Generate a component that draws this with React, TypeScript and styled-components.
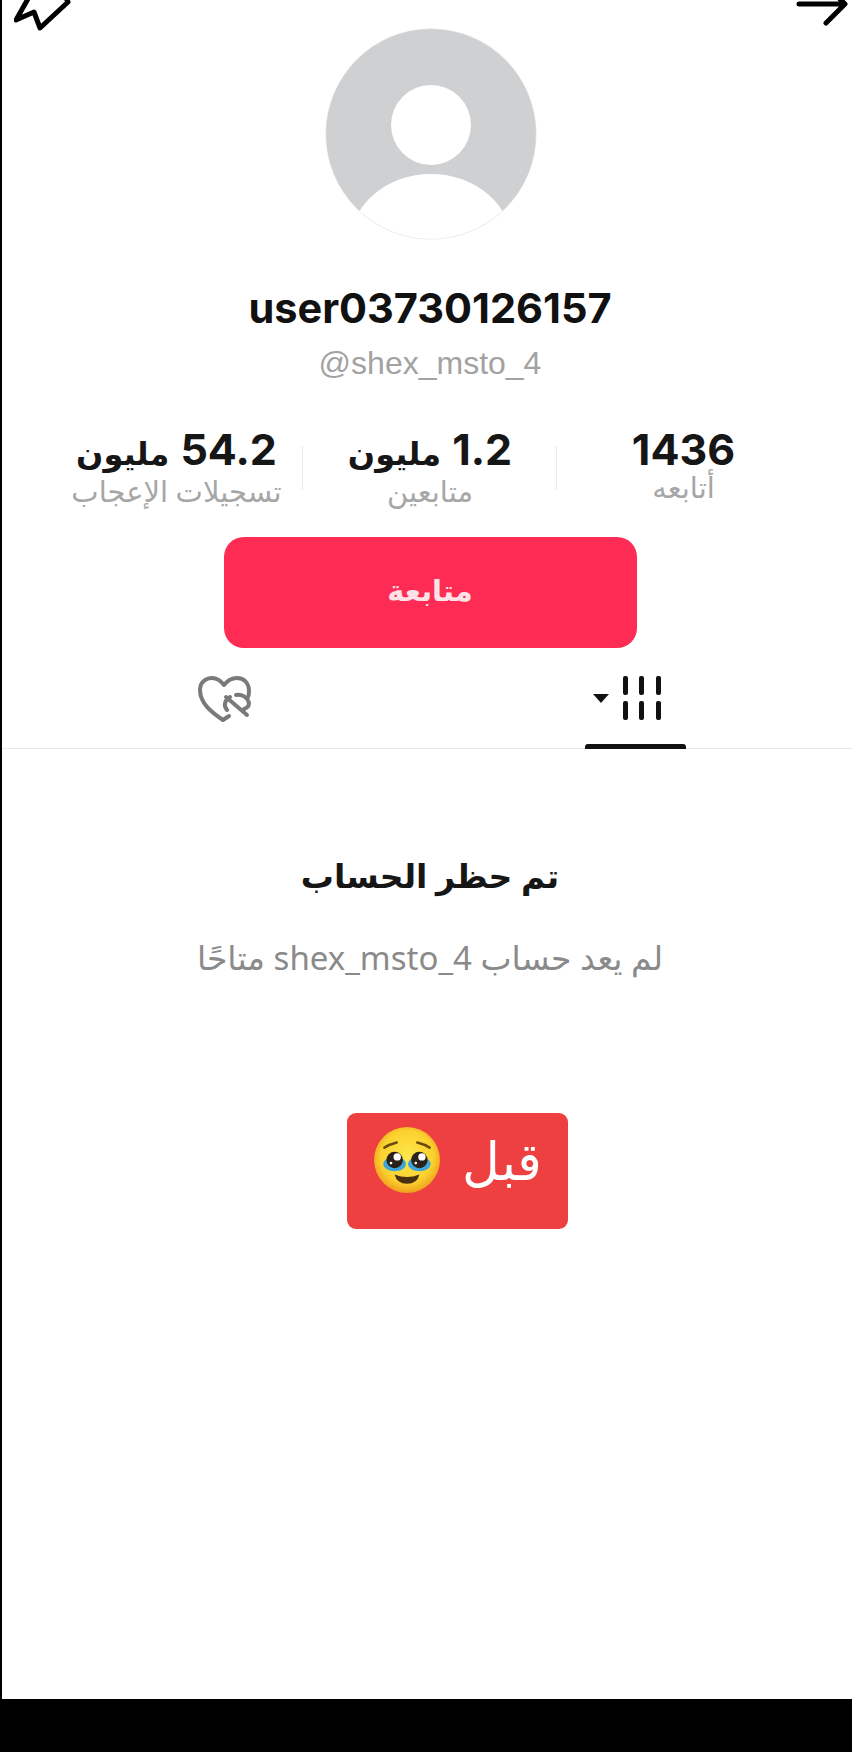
import React from 'react'
import styled, { createGlobalStyle } from 'styled-components'

const GlobalStyle = createGlobalStyle`
    html, body {
        margin: 0;
        padding: 0;
        background: #000;
    }
`

const ARABIC = `"Noto Sans", "Liberation Sans", "DejaVu Sans", sans-serif`
const LATIN = `"Liberation Sans", Arial, sans-serif`
const NUMERIC = `Inter, "Noto Sans", sans-serif`

const Screen = styled.div`
    width: 852px;
    height: 1752px;
    background: #000;
    overflow: hidden;
`

const Page = styled.main`
    height: 1699px;
    box-sizing: border-box;
    margin-left: 2px;
    padding-left: 6px;
    background: #fff;
    display: flex;
    flex-direction: column;
    align-items: center;
`

const TopBar = styled.header`
    align-self: stretch;
    margin-left: -6px;
    height: 28px;
    box-sizing: border-box;
    padding-left: 12px;
    display: flex;
    justify-content: space-between;
    align-items: flex-start;
`

const Avatar = styled.svg`
    display: block;
    flex: none;
    margin-left: 1px;
    width: 212px;
    height: 212px;
`

const Username = styled.h1`
    margin: 44px 0 0;
    font: 700 41.5px/48px ${NUMERIC};
    color: #111;
`

const Handle = styled.div`
    margin-top: 12px;
    font: 400 32px/38px ${LATIN};
    color: #a2a2a2;
`

const Stats = styled.section`
    margin: 44px 0 0 -6px;
    align-self: stretch;
    display: grid;
    grid-template-columns: 301px 254px 1fr;
`

const Stat = styled.div<{ $divider?: boolean; $inset?: string }>`
    position: relative;
    height: 82px;
    box-sizing: border-box;
    padding: ${p => p.$inset || '0'};
    display: flex;
    flex-direction: column;
    align-items: center;
    ${p => p.$divider && `
        &::after {
            content: '';
            position: absolute;
            right: 0;
            top: 20px;
            height: 44px;
            width: 1px;
            background: #e9e9e9;
        }
    `}
`

const StatValue = styled.div`
    display: flex;
    align-items: baseline;
    gap: 11px;
    font: 700 43px/46px ${NUMERIC};
    color: #161616;
    white-space: nowrap;
`

const StatUnit = styled.span`
    font: 700 32px/46px ${ARABIC};
`

const StatLabel = styled.div`
    font: 400 29px/30px ${ARABIC};
    color: #a6a6a6;
    white-space: nowrap;
`

const FollowButton = styled.button`
    margin-top: 29px;
    flex: none;
    width: 413px;
    height: 111px;
    padding: 0 0 6px;
    border: 0;
    border-radius: 20px;
    background: #fe2c55;
    color: #fde2e7;
    font: 600 29px/36px ${ARABIC};
`

const Tabs = styled.nav`
    align-self: stretch;
    margin-left: -6px;
    flex: none;
    height: 101px;
    box-sizing: border-box;
    border-bottom: 1px solid #e8e8e8;
    display: grid;
    grid-template-columns: 445px 1fr;
`

const Tab = styled.div<{ $inset?: number }>`
    position: relative;
    display: flex;
    justify-content: center;
    align-items: flex-start;
    padding: 28px ${p => p.$inset || 0}px 0 0;
`

const ActiveMark = styled.span`
    position: absolute;
    bottom: -1px;
    left: 138px;
    width: 101px;
    height: 5px;
    border-radius: 3px 3px 0 0;
    background: #111;
`

const BlockedTitle = styled.h2`
    margin: 100px 0 0;
    font: 700 33px/54px ${ARABIC};
    color: #161616;
`

const BlockedText = styled.p`
    margin: 34px 0 0;
    font: 400 33px/42px ${ARABIC};
    color: #8a8a8a;
`

const Tag = styled.div`
    margin: 134px 0 0 55px;
    flex: none;
    width: 221px;
    height: 116px;
    box-sizing: border-box;
    padding-bottom: 22px;
    border-radius: 9px;
    background: #ee4040;
    display: flex;
    align-items: center;
    justify-content: center;
    gap: 21px;
    color: #fff;
    font: 400 52px/60px ${ARABIC};
`

const PleadingFace = () => (
    <svg width="68" height="68" viewBox="0 0 66 66">
        <defs>
            <radialGradient id="face" cx="50%" cy="45%" r="55%">
                <stop offset="0%" stopColor="#fde74a" />
                <stop offset="72%" stopColor="#fbd12e" />
                <stop offset="100%" stopColor="#ef9f1e" />
            </radialGradient>
        </defs>
        <circle cx="33" cy="33" r="32" fill="url(#face)" />
        <path d="M11 21c3-2 8-4 12-5M55 21c-3-2-8-4-12-5" fill="none" stroke="#6b4a12" strokeWidth="2.4" strokeLinecap="round" />
        <ellipse cx="21" cy="37" rx="11" ry="7" fill="#3fa5d8" />
        <ellipse cx="45" cy="37" rx="11" ry="7" fill="#3fa5d8" />
        <circle cx="21" cy="33" r="8" fill="#2a2118" />
        <circle cx="45" cy="33" r="8" fill="#2a2118" />
        <circle cx="23.5" cy="30" r="3.6" fill="#fff" />
        <circle cx="47.5" cy="30" r="3.6" fill="#fff" />
        <circle cx="17.5" cy="36" r="1.3" fill="#fff" />
        <circle cx="41.5" cy="36" r="1.3" fill="#fff" />
        <path d="M21 47 Q33 52 45 47 Q43 56 33 56 Q23 56 21 47Z" fill="#4a2f10" />
    </svg>
)

const App = () => (
    <Screen>
        <GlobalStyle />
        <Page>
            <TopBar>
                <svg width="60" height="32" viewBox="0 0 60 32" fill="none" stroke="#000" strokeWidth="5" strokeLinejoin="round" strokeLinecap="round">
                    <path d="M15 -3 L2 20 L20 12 L26 28 L54 2 L50 -6" />
                </svg>
                <svg width="56" height="26" viewBox="0 0 56 26" fill="none" stroke="#000" strokeWidth="5" strokeLinecap="round" strokeLinejoin="round">
                    <path d="M3 4 H49 L30 23 M40 -5 L49 4" />
                </svg>
            </TopBar>
            <Avatar viewBox="0 0 212 212">
                <defs>
                    <clipPath id="avatarClip">
                        <circle cx="106" cy="106" r="105" />
                    </clipPath>
                </defs>
                <circle cx="106" cy="106" r="105.5" fill="#e4e4e4" />
                <circle cx="106" cy="106" r="105" fill="#cfd0d2" clipPath="url(#avatarClip)" />
                <circle cx="106" cy="97" r="40" fill="#fff" />
                <ellipse cx="106" cy="216" rx="81" ry="70" fill="#fff" clipPath="url(#avatarClip)" />
            </Avatar>
            <Username>user03730126157</Username>
            <Handle>@shex_msto_4</Handle>
            <Stats>
                <Stat $divider $inset="0 0 0 48px">
                    <StatValue dir="rtl">54.2<StatUnit>مليون</StatUnit></StatValue>
                    <StatLabel dir="rtl">تسجيلات الإعجاب</StatLabel>
                </Stat>
                <Stat $divider>
                    <StatValue dir="rtl">1.2<StatUnit>مليون</StatUnit></StatValue>
                    <StatLabel dir="rtl">متابعين</StatLabel>
                </Stat>
                <Stat $inset="0 42px 0 0">
                    <StatValue>1436</StatValue>
                    <StatLabel dir="rtl">أتابعه</StatLabel>
                </Stat>
            </Stats>
            <FollowButton dir="rtl">متابعة</FollowButton>
            <Tabs>
                <Tab>
                    <svg width="56" height="48" viewBox="0 0 56 48" fill="none" stroke="#7a7a7a" strokeWidth="4" strokeLinecap="round" strokeLinejoin="round">
                        <path d="M26 44 C14 36 3 27 3 14 C3 6 9 2 15 2 C20 2 24 5 27 9 C30 5 35 2 40 2 C47 2 52 7 52 15 C52 17 52 19 51 21" />
                        <path d="M26 44 L32 40" />
                        <path d="M29 21 L50 39" />
                        <path d="M30 34 C26 29 28 24 33 21" />
                        <path d="M39 19 C45 18 50 21 52 27 C52 30 50 32 47 33" />
                    </svg>
                </Tab>
                <Tab $inset={46}>
                    <svg width="70" height="44" viewBox="0 0 70 44" fill="#111">
                        <path d="M1 18 H17 L9 27 Z" />
                        <rect x="31" y="0" width="5" height="19" rx="2" />
                        <rect x="47" y="0" width="5" height="19" rx="2" />
                        <rect x="64" y="0" width="5" height="19" rx="2" />
                        <rect x="31" y="25" width="5" height="19" rx="2" />
                        <rect x="47" y="25" width="5" height="19" rx="2" />
                        <rect x="64" y="25" width="5" height="19" rx="2" />
                    </svg>
                    <ActiveMark />
                </Tab>
            </Tabs>
            <BlockedTitle dir="rtl">تم حظر الحساب</BlockedTitle>
            <BlockedText dir="rtl">لم يعد حساب shex_msto_4 متاحًا</BlockedText>
            <Tag>
                <PleadingFace />
                <span dir="rtl">قبل</span>
            </Tag>
        </Page>
    </Screen>
)

export default App
